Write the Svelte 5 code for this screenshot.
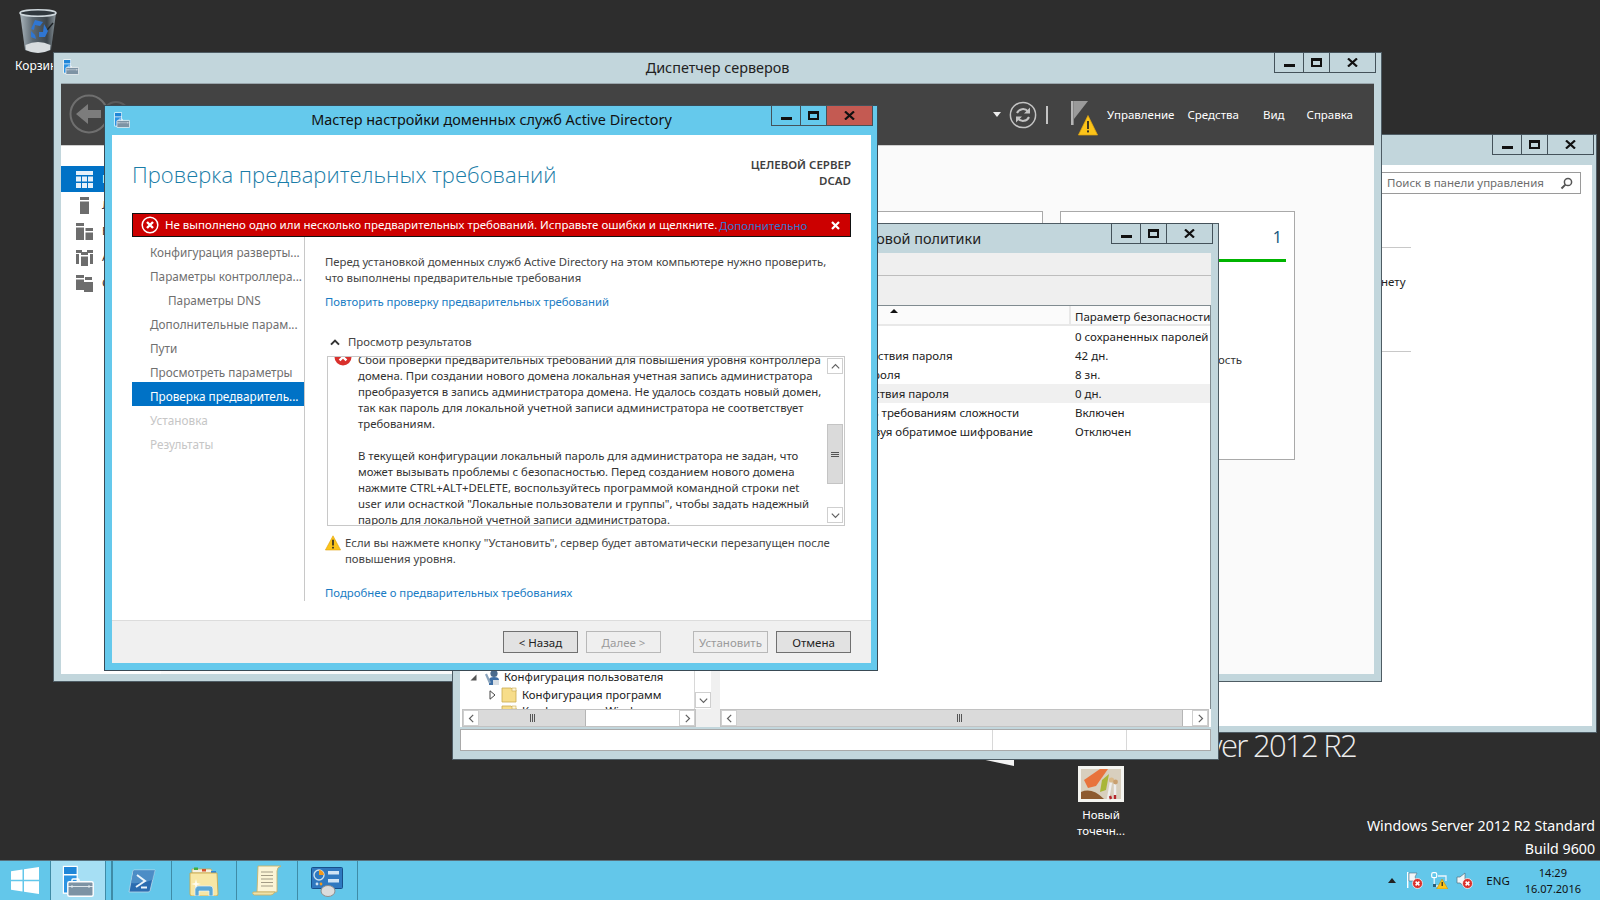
<script lang="ts">
  const wizardSteps = [
    { label: "Конфигурация разверты...", kind: "" },
    { label: "Параметры контроллера...", kind: "" },
    { label: "Параметры DNS", kind: "sub" },
    { label: "Дополнительные парам...", kind: "" },
    { label: "Пути", kind: "" },
    { label: "Просмотреть параметры", kind: "" },
    { label: "Проверка предваритель...", kind: "active" },
    { label: "Установка", kind: "off" },
    { label: "Результаты", kind: "off" }
  ];

  const policyRows = [
    { name: "Вести журнал паролей", value: "0 сохраненных паролей" },
    { name: "Максимальный срок действия пароля", value: "42 дн." },
    { name: "Минимальная длина пароля", value: "8 зн." },
    { name: "Минимальный срок действия пароля", value: "0 дн.", selected: true },
    { name: "Пароль должен отвечать требованиям сложности", value: "Включен" },
    { name: "Хранить пароли, используя обратимое шифрование", value: "Отключен" }
  ];

  const navLetters = ["Панель мониторинга", "Локальный сервер", "Все серверы", "AD DS", "Службы"];
</script>

{#snippet caption(closeRed = false)}
  <div class="caption">
    <span class="cap-btn min"><i></i></span>
    <span class="cap-btn max"><i></i></span>
    <span class="cap-btn close" class:red={closeRed}>
      <svg width="11" height="9" viewBox="0 0 11 9"><path d="M1 0.5 L10 8.5 M10 0.5 L1 8.5" stroke="#111" stroke-width="2.2" /></svg>
    </span>
  </div>
{/snippet}

{#snippet smIcon(size)}
  <svg width={size} height={size} viewBox="0 0 32 32">
    <rect x="0.8" y="0.8" width="15" height="28" fill="#fff" />
    <rect x="2" y="2" width="12.6" height="7" fill="#1f86d8" />
    <rect x="2" y="10.5" width="12.6" height="17" fill="#2b93e2" />
    <rect x="10" y="14" width="7" height="4" rx="1" fill="none" stroke="#fff" stroke-width="1.4" />
    <rect x="5.8" y="16.8" width="25.4" height="14.4" rx="1.5" fill="#7d93a4" stroke="#fff" stroke-width="1.4" />
    <path d="M6 21.5 H31 M10 20 v3 M27 20 v3" stroke="#e8eef2" stroke-width="0.9" />
  </svg>
{/snippet}

{#snippet warnIcon(size)}
  <svg width={size} height={size} viewBox="0 0 16 16">
    <path d="M8 0.8 L15.6 15 H0.4 Z" fill="#fcc419" stroke="#e0a30f" stroke-width="0.6" stroke-linejoin="round" />
    <path d="M8 4.8 V10.6" stroke="#222" stroke-width="1.6" />
    <rect x="7.2" y="11.8" width="1.6" height="1.7" fill="#222" />
  </svg>
{/snippet}

{#snippet chevron(dir)}
  <svg class="chev" width="9" height="9" viewBox="0 0 9 9">
    {#if dir === "up"}
      <path d="M0.8 6.4 L4.5 2.7 L8.2 6.4" />
    {:else if dir === "down"}
      <path d="M0.8 2.6 L4.5 6.3 L8.2 2.6" />
    {:else if dir === "left"}
      <path d="M6.2 0.8 L2.5 4.5 L6.2 8.2" />
    {:else}
      <path d="M2.8 0.8 L6.5 4.5 L2.8 8.2" />
    {/if}
  </svg>
{/snippet}

{#snippet hscrollbar(cls)}
  <div class="hscroll {cls}">
    <span class="sb-btn">{@render chevron("left")}</span>
    <span class="h-thumb"><b></b><b></b><b></b></span>
    <span class="h-rest"></span>
    <span class="sb-btn">{@render chevron("right")}</span>
  </div>
{/snippet}

{#snippet folder()}
  <svg width="16" height="16" viewBox="0 0 16 16">
    <path d="M1 1 H10 L12 3 H15 V15 H1 Z" fill="#f7dd8a" stroke="#c9a94f" stroke-width="0.8" />
    <rect x="11" y="1" width="4" height="3" fill="#fff6d5" stroke="#c9a94f" stroke-width="0.6" />
  </svg>
{/snippet}

<div class="desktop">
  <!-- wallpaper and desktop icons -->
  <svg class="recycle" width="38" height="46" viewBox="0 0 38 46">
    <defs>
      <linearGradient id="binBody" x1="0" x2="1" y1="0" y2="0">
        <stop offset="0" stop-color="#a9b4bb" />
        <stop offset="0.35" stop-color="#5d6972" />
        <stop offset="0.75" stop-color="#3c444a" />
        <stop offset="1" stop-color="#8b969d" />
      </linearGradient>
    </defs>
    <path d="M1 4 L6 41 Q19 47 32 41 L37 4 Z" fill="url(#binBody)" />
    <path d="M24 26 L34 14" stroke="#1f2428" stroke-width="1.4" />
    <ellipse cx="19" cy="4" rx="18" ry="3.2" fill="#30383e" stroke="#cfd8dd" stroke-width="1.5" />
    <path d="M12 20 L16 11 L24 13 L21 17 L16 16 L15 21 Z M25 15 L29 22 L26 28 L20 28 L20 23 L24 23 Z M12 22 L16 26 L17 30 L12 28 Z" fill="#2f76d2" />
    <path d="M6.5 36 Q19 30 31.5 36 L31 41 Q19 47 7 41 Z" fill="#d8dcde" />
  </svg>
  <div class="bin-label">Корзина</div>

  <div class="brand">Windows Server 2012 R2</div>
  <svg class="logo-tip" width="40" height="8" viewBox="0 0 40 8"><path d="M0 0 H38 V8 Z" fill="#f4f4f4" /></svg>

  <div class="paint-file">
    <svg width="46" height="36" viewBox="0 0 46 36">
      <rect width="46" height="36" fill="#f4f4f0" />
      <rect x="3" y="3" width="40" height="30" fill="#d8cfbe" />
      <path d="M6 14 L22 3 H30 L18 20 L10 22 Z" fill="#e8733c" />
      <path d="M24 14 L31 8 L28 24 L22 26 Z" fill="#a9b637" />
      <path d="M3 33 V26 Q14 21 26 33 Z" fill="#8d5a30" />
      <path d="M33 16 L30 33 M37 18 L37 33" stroke="#eee" stroke-width="2.4" />
      <path d="M33 33 L32 30 M37 33 V29" stroke="#b5262a" stroke-width="2.4" />
      <circle cx="33.5" cy="14" r="2.6" fill="#d9b98a" />
      <circle cx="37.5" cy="16" r="2.4" fill="#c9a070" />
    </svg>
    <div>Новый</div>
    <div>точечн...</div>
  </div>

  <div class="edition">
    <div>Windows Server 2012 R2 Standard</div>
    <div>Build 9600</div>
  </div>

  <!-- control panel window -->
  <section class="win panel-win">
    <div class="panel-cap">{@render caption()}</div>
    <div class="panel-body">
      <div class="search">
        <span>Поиск в панели управления</span>
        <svg width="13" height="13" viewBox="0 0 13 13"><circle cx="8" cy="5" r="3.6" fill="none" stroke="#555" stroke-width="1.5" /><path d="M5.4 7.6 L1.5 11.5" stroke="#555" stroke-width="2" /></svg>
      </div>
      <div class="panel-line"></div>
      <div class="panel-net">нету</div>
      <div class="panel-line second"></div>
    </div>
  </section>

  <!-- server manager window -->
  <section class="win sm-win">
    <div class="sm-title">
      {@render smIcon(16)}
      <span>Диспетчер серверов</span>
      {@render caption()}
    </div>
    <div class="sm-inner">
      <header class="sm-head">
        <svg class="back" width="60" height="44" viewBox="0 0 60 44">
          <circle cx="48" cy="22" r="13" fill="none" stroke="#5a5a5a" stroke-width="2" />
          <circle cx="21" cy="21" r="18.5" fill="#434343" stroke="#6f6f6f" stroke-width="2" />
          <path d="M8 21 L20 11 V17 H33 V25 H20 V31 Z" fill="#7c7c7c" />
        </svg>
        <div class="sm-tools">
          <span class="drop"></span>
          <svg width="28" height="28" viewBox="0 0 28 28">
            <circle cx="14" cy="14" r="12.6" fill="none" stroke="#c4c4c4" stroke-width="1.5" />
            <path d="M8 12 A6.5 6.5 0 0 1 19 10.5 M20 16 A6.5 6.5 0 0 1 9 17.5" fill="none" stroke="#c4c4c4" stroke-width="2" />
            <path d="M21 6.5 V12.5 H15 Z M7 21.5 V15.5 H13 Z" fill="#c4c4c4" />
          </svg>
          <span class="tool-sep"></span>
          <svg class="flag" width="34" height="36" viewBox="0 0 34 36">
            <path d="M1 1 H3.6 V25 H1 Z" fill="#b5b5b5" />
            <path d="M4 1 H18 L4 19 Z" fill="#9a9a9a" />
            <g transform="translate(8 15)">
              <path d="M10 0.5 L19.6 20 H0.4 Z" fill="#fcc419" stroke="#e0a30f" stroke-width="0.7" stroke-linejoin="round" />
              <path d="M10 6 V14" stroke="#222" stroke-width="1.7" />
              <rect x="9.1" y="15.4" width="1.8" height="2" fill="#222" />
            </g>
          </svg>
          <nav class="sm-menu">
            <span>Управление</span>
            <span class="m2">Средства</span>
            <span class="m3">Вид</span>
            <span class="m4">Справка</span>
          </nav>
        </div>
      </header>
      <div class="sm-body">
        <aside class="sm-nav">
          {#each navLetters as label, i}
            <div class="nav-item" class:on={i === 0}>
              <svg width="17" height="17" viewBox="0 0 17 17">
                {#if i === 0}
                  <path d="M0 0 H17 V4 H0 Z M0 5.5 H5 V10.5 H0 Z M6 5.5 H11 V10.5 H6 Z M12 5.5 H17 V10.5 H12 Z M0 12 H5 V17 H0 Z M6 12 H11 V17 H6 Z M12 12 H17 V17 H12 Z" fill="#fff" opacity="0.9" />
                {:else if i === 1}
                  <path d="M4 0 H13 V3 H4 Z M4 4.5 H13 V17 H4 Z" fill="#6d6d6d" />
                {:else if i === 2}
                  <path d="M0 0 H8 V3 H0 Z M0 4.5 H8 V17 H0 Z M9.5 5 H17 V8 H9.5 Z M9.5 9.5 H17 V17 H9.5 Z" fill="#6d6d6d" />
                {:else if i === 3}
                  <path d="M0 1 H6 V4 H0 Z M0 5 H3 V15 H0 Z M11 1 H17 V4 H11 Z M14 5 H17 V15 H14 Z M5 3 H12 V6 H5 Z M5 7.5 H12 V17 H5 Z" fill="#6d6d6d" />
                {:else}
                  <path d="M0 0 H8 V3 H0 Z M0 4.5 H8 V15 H0 Z M9 2 H16 V5 H9 Z M8 7 H17 V17 H8 Z" fill="#6d6d6d" />
                {/if}
              </svg>
              <span>{label}</span>
            </div>
          {/each}
        </aside>
        <div class="sm-cards">
          <div class="card first"></div>
          <div class="card second">
            <div class="card-count">1</div>
            <div class="card-bar"></div>
            <div class="card-text">Производительность</div>
          </div>
        </div>
      </div>
    </div>
  </section>

  <!-- group policy editor window -->
  <section class="win gp-win">
    <div class="gp-title">
      <div class="gp-name">Редактор локальной групповой политики</div>
      {@render caption()}
    </div>
    <div class="gp-bar"></div>
    <div class="gp-bar tall"></div>
    <div class="gp-panes">
      <div class="gp-left">
        <div class="tree-area">
          <div class="tree">
            <div class="tree-row user">
              <svg class="twist" width="7" height="7" viewBox="0 0 7 7"><path d="M0.5 6.5 H6.5 V0.5 Z" fill="#555" /></svg>
              <svg width="17" height="17" viewBox="0 0 17 17">
                <circle cx="10" cy="4.5" r="3.6" fill="#4a6a8c" />
                <path d="M5 16 V11 Q5 8 10 8 Q15 8 15 11 V16 Z" fill="#3d6ea5" />
                <path d="M2 5 L6 14" stroke="#8aa4bd" stroke-width="2.2" />
                <rect x="9" y="11" width="6" height="5" fill="#d8dee4" />
              </svg>
              <span>Конфигурация пользователя</span>
            </div>
            <div class="tree-row folder">
              <svg class="twist" width="7" height="10" viewBox="0 0 7 10"><path d="M1 0.8 L6 5 L1 9.2 Z" fill="#fff" stroke="#444" /></svg>
              {@render folder()}
              <span>Конфигурация программ</span>
            </div>
            <div class="tree-row folder cut">
              <span class="twist-gap"></span>
              {@render folder()}
              <span class="cut-name">Конфигурация Windows</span>
            </div>
          </div>
          <div class="tree-vbar">
            <span class="sb-btn">{@render chevron("down")}</span>
          </div>
        </div>
        <div class="tree-foot">
          {@render hscrollbar("short")}
          <span class="corner"></span>
        </div>
      </div>
      <div class="gp-right">
        <div class="gp-table">
          <div class="gp-row head">
            <div class="cell-name"><span class="sort"></span></div>
            <div class="cell-val">Параметр безопасности</div>
          </div>
          {#each policyRows as row}
            <div class="gp-row" class:sel={row.selected}>
              <div class="cell-name">{row.name}</div>
              <div class="cell-val">{row.value}</div>
            </div>
          {/each}
        </div>
        {@render hscrollbar("long")}
      </div>
    </div>
    <div class="gp-status">
      <span></span><span></span><span></span>
    </div>
  </section>

  <!-- domain services wizard -->
  <section class="win wizard">
    <div class="wiz-title">
      <span class="wiz-icon">{@render smIcon(16)}</span>
      <span class="wiz-name">Мастер настройки доменных служб Active Directory</span>
      {@render caption(true)}
    </div>
    <div class="wiz-page">
      <div class="wiz-main">
        <div class="wiz-head">
          <h1>Проверка предварительных требований</h1>
          <div class="target">ЦЕЛЕВОЙ СЕРВЕР<br />DCAD</div>
        </div>
        <div class="alert">
          <svg width="18" height="18" viewBox="0 0 18 18">
            <circle cx="9" cy="9" r="7.8" fill="none" stroke="#fff" stroke-width="1.5" />
            <path d="M6 6 L12 12 M12 6 L6 12" stroke="#fff" stroke-width="2.4" />
          </svg>
          <span class="alert-text">Не выполнено одно или несколько предварительных требований. Исправьте ошибки и щелкните...</span>
          <span class="alert-link">Дополнительно</span>
          <svg class="alert-x" width="9" height="9" viewBox="0 0 9 9"><path d="M1 1 L8 8 M8 1 L1 8" stroke="#fff" stroke-width="2.2" /></svg>
        </div>
        <div class="wiz-cols">
          <aside class="steps">
            {#each wizardSteps as step}
              <div class="step {step.kind}">{step.label}</div>
            {/each}
          </aside>
          <div class="wiz-content">
            <p class="intro">Перед установкой доменных служб Active Directory на этом компьютере нужно проверить,<br />что выполнены предварительные требования</p>
            <div class="link retry">Повторить проверку предварительных требований</div>
            <div class="results-head">
              <svg width="10" height="7" viewBox="0 0 10 7"><path d="M1 5.6 L5 1.6 L9 5.6" fill="none" stroke="#333" stroke-width="2" /></svg>
              <span>Просмотр результатов</span>
            </div>
            <div class="results">
              <div class="results-scroll">
                <svg class="err" width="18" height="18" viewBox="0 0 18 18">
                  <circle cx="9" cy="9" r="8.5" fill="#d9302c" />
                  <path d="M5.6 5.6 L12.4 12.4 M12.4 5.6 L5.6 12.4" stroke="#fff" stroke-width="2.4" />
                </svg>
                <div class="results-text">
                  <p>Сбои проверки предварительных требований для повышения уровня контроллера<br />домена. При создании нового домена локальная учетная запись администратора<br />преобразуется в запись администратора домена. Не удалось создать новый домен,<br />так как пароль для локальной учетной записи администратора не соответствует<br />требованиям.</p>
                  <p>В текущей конфигурации локальный пароль для администратора не задан, что<br />может вызывать проблемы с безопасностью. Перед созданием нового домена<br />нажмите CTRL+ALT+DELETE, воспользуйтесь программой командной строки net<br />user или оснасткой "Локальные пользователи и группы", чтобы задать надежный<br />пароль для локальной учетной записи администратора.</p>
                </div>
              </div>
              <div class="vscroll">
                <span class="sb-btn">{@render chevron("up")}</span>
                <span class="v-gap a"></span>
                <span class="v-thumb"><b></b><b></b><b></b></span>
                <span class="v-gap"></span>
                <span class="sb-btn">{@render chevron("down")}</span>
              </div>
            </div>
            <div class="notice">
              {@render warnIcon(16)}
              <p>Если вы нажмете кнопку "Установить", сервер будет автоматически перезапущен после<br />повышения уровня.</p>
            </div>
            <div class="link more">Подробнее о предварительных требованиях</div>
          </div>
        </div>
      </div>
      <footer class="wiz-foot">
        <span class="btn">&lt; Назад</span>
        <span class="btn dis">Далее &gt;</span>
        <span class="btn dis far">Установить</span>
        <span class="btn">Отмена</span>
      </footer>
    </div>
  </section>

  <!-- taskbar -->
  <div class="taskbar">
    <div class="tb-tile start">
      <svg width="28" height="27" viewBox="0 0 28 27">
        <path d="M0 4.2 L11.5 2.5 V12.7 H0 Z M13 2.2 L28 0 V12.7 H13 Z M0 14.2 H11.5 V24.4 L0 22.7 Z M13 14.2 H28 V27 L13 24.7 Z" fill="#fff" />
      </svg>
    </div>
    <div class="tb-tile sm">{@render smIcon(32)}</div>
    <div class="tb-tile gap"></div>
    <div class="tb-tile ps">
      <svg width="28" height="24" viewBox="0 0 28 24">
        <path d="M6 1 H27 L22 22 Q21.6 23 20 23 H1 L5 2 Q5.3 1 6 1 Z" fill="#2b6cb0" stroke="#bcd8ea" stroke-width="0.8" />
        <path d="M6 1 H27 L24.6 11 Q14 15 3 14 Z" fill="#5b9bd0" opacity="0.7" />
        <path d="M9 6 L17 12 L8 18 M13 18.5 H19" fill="none" stroke="#eaf4fb" stroke-width="2" />
      </svg>
    </div>
    <div class="tb-tile ex">
      <svg width="30" height="30" viewBox="0 0 30 30">
        <path d="M3 3 H22 L24 7 H3 Z" fill="#f4f0e0" stroke="#c9a94f" stroke-width="0.8" />
        <rect x="5" y="1.5" width="4" height="2.5" fill="#3fae3f" />
        <rect x="13" y="3" width="4" height="2.5" fill="#d9532c" />
        <rect x="22" y="5" width="5" height="2.5" fill="#3486d6" />
        <path d="M1 7 H28 L29 28 Q29 30 27 30 H3 Q1 30 1 28 Z" fill="#f7e7a6" stroke="#c9a94f" stroke-width="0.9" />
        <path d="M6 30 V23 Q6 20 9 20 H21 Q24 20 24 23 V30 H20 V25 H10 V30 Z" fill="#5aa7d6" stroke="#eaf4fb" stroke-width="0.7" />
        <path d="M7 13 L8 17 L12 18 L8 19 L7 23 L6 19 L2 18 L6 17 Z" fill="#fff" opacity="0.85" />
      </svg>
    </div>
    <div class="tb-tile np">
      <svg width="30" height="31" viewBox="0 0 30 31">
        <path d="M6 1 H29 Q25 2 25 6 V27 H5 Z" fill="#fbf4d6" stroke="#c9b26a" stroke-width="0.9" />
        <path d="M1 27 H23 Q21 30 19 30 H2 Q0 29 1 27 Z" fill="#efe2a8" stroke="#c9b26a" stroke-width="0.9" />
        <path d="M9 7 H21 M9 10.5 H21 M9 14 H21 M9 17.5 H21 M9 21 H21" stroke="#a39b85" stroke-width="1.1" />
      </svg>
    </div>
    <div class="tb-tile cp">
      <svg class="cp-ico" width="33" height="30" viewBox="0 0 33 30">
        <rect x="0.5" y="0.5" width="31" height="21" rx="1" fill="#2f79c0" stroke="#17508a" />
        <circle cx="8" cy="8" r="5" fill="none" stroke="#c8e0f2" stroke-width="1.4" />
        <path d="M8 3 A5 5 0 0 1 13 8 H8 Z" fill="#f39a1d" />
        <rect x="17" y="4" width="11" height="3.5" fill="#cfe4f4" />
        <rect x="17" y="12" width="11" height="3.5" fill="#cfe4f4" />
        <circle cx="6" cy="17" r="1.4" fill="#cfe4f4" />
        <circle cx="10" cy="17" r="1.4" fill="#f39a1d" />
        <ellipse cx="17" cy="24" rx="7" ry="5.5" fill="#dcdcdc" stroke="#8d8d8d" />
      </svg>
    </div>
    <div class="tray">
      <span class="tray-up"></span>
      <svg class="tray-ico" width="17" height="17" viewBox="0 0 17 17">
        <path d="M1 0 H2.4 V16 H1 Z" fill="#fff" />
        <path d="M3 1 H11 L9 5 L11 9 H3 Z" fill="#f2f6f8" stroke="#51707f" stroke-width="0.6" />
        <circle cx="11.5" cy="11.5" r="5" fill="#d9302c" stroke="#fff" stroke-width="0.7" />
        <path d="M9.6 9.6 L13.4 13.4 M13.4 9.6 L9.6 13.4" stroke="#fff" stroke-width="1.5" />
      </svg>
      <svg class="tray-ico" width="17" height="17" viewBox="0 0 17 17">
        <rect x="0.7" y="0.7" width="5" height="5" rx="1.5" fill="none" stroke="#fff" stroke-width="1.2" />
        <path d="M3.2 6 V14 H8 M7 4 H15 V9" fill="none" stroke="#eaf4fb" stroke-width="1.3" />
        <rect x="2" y="12" width="3" height="3" fill="#2d5d75" />
        <path d="M11 7 L17 17 H5.5 Z" fill="#fcc419" stroke="#b98a10" stroke-width="0.5" />
        <path d="M11.2 10 V14" stroke="#222" stroke-width="1.2" />
      </svg>
      <svg class="tray-ico" width="17" height="17" viewBox="0 0 17 17">
        <path d="M1 5 H4 L9 1 V15 L4 11 H1 Z" fill="#f2f6f8" stroke="#51707f" stroke-width="0.7" />
        <circle cx="11.5" cy="11.5" r="5" fill="#d9302c" stroke="#fff" stroke-width="0.7" />
        <path d="M9.6 9.6 L13.4 13.4 M13.4 9.6 L9.6 13.4" stroke="#fff" stroke-width="1.5" />
      </svg>
      <span class="lang">ENG</span>
      <div class="clock">14:29<br />16.07.2016</div>
    </div>
  </div>
</div>

<style>
  :global(body) {
    margin: 0;
    background: #2d2d2d;
    overflow: hidden;
  }
  * {
    box-sizing: border-box;
  }
  p,
  h1 {
    margin: 0;
  }

  .desktop {
    position: relative;
    width: 1600px;
    height: 900px;
    background: #2d2d2d;
    overflow: hidden;
    font: 11.5px/16px "Noto Sans", "Open Sans", sans-serif;
    color: #333;
  }

  /* desktop items sit freely on the wallpaper */
  .recycle {
    position: absolute;
    left: 19px;
    top: 9px;
  }
  .bin-label {
    position: absolute;
    left: 15px;
    top: 58px;
    color: #fff;
    font-size: 12px;
  }
  .brand {
    position: absolute;
    right: 244px;
    top: 724px;
    font: 300 31px/42px "Open Sans", sans-serif;
    letter-spacing: -1.7px;
    color: #ececec;
    white-space: nowrap;
  }
  .logo-tip {
    position: absolute;
    left: 976px;
    top: 758px;
  }
  .paint-file {
    position: absolute;
    left: 1061px;
    top: 766px;
    width: 80px;
    display: flex;
    flex-direction: column;
    align-items: center;
    color: #fff;
  }
  .paint-file svg {
    margin-bottom: 5px;
  }
  .edition {
    position: absolute;
    right: 5px;
    top: 814px;
    text-align: right;
    color: #fff;
    font-size: 14.2px;
    line-height: 23px;
  }

  /* windows */
  .win {
    position: absolute;
    border: 1px solid #4e5c64;
    background: #c2d6dc;
  }
  .caption {
    display: flex;
    align-items: stretch;
    height: 21px;
    border: 1px solid #44525a;
    margin: -1px -2px 0 0;
  }
  .cap-btn {
    display: flex;
    align-items: center;
    justify-content: center;
    border-left: 1px solid #44525a;
  }
  .cap-btn:first-child {
    border-left: 0;
  }
  .min {
    width: 28px;
    padding-top: 5px;
  }
  .min i {
    width: 11px;
    height: 3px;
    background: #111;
  }
  .max {
    width: 26px;
  }
  .max i {
    width: 11px;
    height: 9px;
    border: 2px solid #111;
    border-top-width: 3px;
  }
  .close {
    width: 46px;
  }
  .close.red {
    background: #c45a52;
  }

  /* control panel */
  .panel-win {
    left: 1000px;
    top: 134px;
    width: 597px;
    height: 599px;
    padding: 0 4px 6px 7px;
    display: flex;
    flex-direction: column;
  }
  .panel-cap {
    height: 30px;
    display: flex;
    justify-content: flex-end;
  }
  .panel-body {
    flex: 1;
    background: #fff;
    padding: 7px 11px 0 373px;
  }
  .search {
    height: 22px;
    border: 1px solid #9a9a9a;
    display: flex;
    align-items: center;
    justify-content: space-between;
    padding: 0 7px 0 11px;
    color: #6d6d6d;
    margin-left: -6px;
    overflow: hidden;
  }
  .panel-line {
    height: 1px;
    width: 30px;
    background: #c8c8c8;
    margin-top: 53px;
  }
  .panel-net {
    margin-top: 26px;
    color: #222;
  }
  .panel-line.second {
    margin-top: 61px;
  }

  /* server manager */
  .sm-win {
    left: 53px;
    top: 52px;
    width: 1329px;
    height: 630px;
    padding: 0 7px 7px 7px;
    display: flex;
    flex-direction: column;
  }
  .sm-title {
    height: 30px;
    display: grid;
    grid-template-columns: 1fr auto 1fr;
    align-items: start;
    flex: none;
    font-size: 14.4px;
  }
  .sm-title > :global(svg) {
    margin: 6px 0 0 2px;
  }
  .sm-title > span {
    padding-top: 5px;
    color: #222;
    line-height: 20px;
  }
  .sm-title :global(.caption) {
    justify-self: end;
  }
  .sm-inner {
    flex: 1;
    background: #fafafa;
    display: flex;
    flex-direction: column;
    border-top: 1px solid #9aa7ad;
  }
  .sm-head {
    height: 62px;
    background: #434343;
    display: flex;
    align-items: center;
    justify-content: space-between;
    border-bottom: 1px solid #cfcfcf;
    padding: 0 0 0 7px;
  }
  .sm-tools {
    display: flex;
    align-items: center;
    padding-right: 21px;
    color: #fff;
  }
  .drop {
    border: 4px solid transparent;
    border-top: 5px solid #eee;
    border-bottom: 0;
    margin-right: 8px;
  }
  .tool-sep {
    width: 2px;
    height: 18px;
    background: #c4c4c4;
    margin: 0 22px 0 9px;
  }
  .flag {
    margin: 6px 0 0 0;
  }
  .sm-menu {
    display: flex;
    margin-left: 3px;
  }
  .m2 {
    margin-left: 13px;
  }
  .m3 {
    margin-left: 24px;
  }
  .m4 {
    margin-left: 22px;
  }
  .sm-body {
    flex: 1;
    display: flex;
  }
  .sm-nav {
    width: 100px;
    padding-top: 20px;
    background: #fff;
  }
  .nav-item {
    height: 26px;
    padding-left: 15px;
    display: flex;
    align-items: center;
    gap: 9px;
    white-space: nowrap;
    color: #333;
    overflow: hidden;
  }
  .nav-item svg {
    flex: none;
  }
  .nav-item.on {
    background: #0072c6;
    color: #fff;
  }
  .sm-cards {
    flex: 1;
    display: flex;
    justify-content: flex-end;
    gap: 17px;
    padding: 65px 79px 0 0;
  }
  .card {
    background: #fff;
    border: 1px solid #a9a9a9;
    height: 249px;
  }
  .card.first {
    width: 500px;
  }
  .card.second {
    width: 235px;
    padding: 15px 8px 0 6px;
    text-align: right;
  }
  .card-count {
    font-size: 16px;
    line-height: 20px;
    color: #1c5a80;
    padding-right: 4px;
  }
  .card-bar {
    height: 3px;
    background: #00b400;
    margin-top: 12px;
  }
  .card-text {
    margin-top: 90px;
    padding-right: 44px;
    white-space: nowrap;
  }

  /* group policy */
  .gp-win {
    left: 452px;
    top: 223px;
    width: 767px;
    height: 537px;
    padding: 0 7px 8px 7px;
    display: flex;
    flex-direction: column;
  }
  .gp-title {
    height: 29px;
    position: relative;
    text-align: center;
    font-size: 14.4px;
    line-height: 20px;
    flex: none;
  }
  .gp-name {
    padding-top: 5px;
    color: #222;
  }
  .gp-title :global(.caption) {
    position: absolute;
    right: 0;
    top: 0;
  }
  .gp-bar {
    height: 23px;
    background: #efefef;
    flex: none;
    border-bottom: 1px solid #bdbdbd;
  }
  .gp-bar.tall {
    height: 30px;
    border-bottom: 1px solid #808b90;
  }
  .gp-panes {
    flex: 1;
    display: flex;
    gap: 9px;
    background: #f0f0f0;
    min-height: 0;
  }
  .gp-left {
    width: 251px;
    display: flex;
    flex-direction: column;
    background: #fff;
  }
  .tree-area {
    flex: 1;
    display: flex;
    min-height: 0;
    overflow: hidden;
  }
  .tree {
    flex: 1;
    display: flex;
    flex-direction: column;
    justify-content: flex-end;
    overflow: hidden;
    color: #222;
    font-size: 11.35px;
  }
  .tree-row {
    height: 18px;
    display: flex;
    align-items: center;
    gap: 4px;
    white-space: nowrap;
    flex: none;
  }
  .tree-row.user {
    padding-left: 10px;
    gap: 7px;
  }
  .tree-row.user svg:nth-child(2) {
    margin-right: -4px;
  }
  .tree-row.folder {
    padding-left: 29px;
    gap: 5px;
  }
  .twist-gap {
    width: 7px;
  }
  .tree-row.cut {
    height: 17px;
    margin-bottom: -12px;
  }
  .cut-name {
    margin-top: -4px;
  }
  .tree-vbar {
    width: 17px;
    display: flex;
    flex-direction: column;
    justify-content: flex-end;
    background: #fff;
    border-left: 1px solid #d8d8d8;
    padding-bottom: 1px;
  }
  .tree-foot {
    display: flex;
    height: 18px;
    flex: none;
  }
  .corner {
    width: 17px;
    background: #f0f0f0;
  }
  .hscroll {
    height: 18px;
    display: flex;
    flex: none;
    border: 1px solid #c2c2c2;
    background: #fff;
  }
  .hscroll.short {
    width: 234px;
    margin-left: 2px;
  }
  .hscroll.long {
    width: 489px;
  }
  .sb-btn {
    width: 16px;
    height: 16px;
    flex: none;
    display: flex;
    align-items: center;
    justify-content: center;
    background: #fff;
    border: 1px solid #cfcfcf;
  }
  .chev path {
    fill: none;
    stroke: #606060;
    stroke-width: 1.2;
  }
  .h-thumb {
    background: #dadada;
    display: flex;
    align-items: center;
    justify-content: center;
    gap: 1px;
    border-right: 1px solid #b5b5b5;
  }
  .h-thumb b {
    width: 1px;
    height: 8px;
    background: #555;
  }
  .short .h-thumb {
    width: 107px;
  }
  .long .h-thumb {
    width: 446px;
  }
  .h-rest {
    flex: 1;
  }
  .gp-right {
    width: 491px;
    display: flex;
    flex-direction: column;
    background: #fff;
  }
  .gp-table {
    flex: 1;
    border-right: 1px solid #808b90;
    color: #222;
    white-space: nowrap;
  }
  .gp-row {
    display: grid;
    grid-template-columns: 349px 1fr;
    height: 19px;
    line-height: 19px;
  }
  .gp-row.sel {
    background: #f0f0f0;
  }
  .gp-row.head {
    height: 20px;
    line-height: 22px;
    margin-bottom: 1px;
    background: #fbfbfb;
    border-bottom: 2px solid #e8e8e8;
  }
  .gp-row.head .cell-val {
    border-left: 2px solid #e8e8e8;
    padding-left: 4px;
    overflow: hidden;
  }
  .gp-row.head .cell-name {
    position: relative;
  }
  .sort {
    position: absolute;
    left: 170px;
    top: 3px;
    border: 4px solid transparent;
    border-bottom: 4px solid #111;
    border-top: 0;
  }
  .cell-name {
    padding-left: 19px;
  }
  .cell-val {
    padding-left: 6px;
  }
  .gp-status {
    height: 22px;
    margin-top: 2px;
    display: grid;
    grid-template-columns: 531px 134px 1fr;
    background: #fff;
    border: 1px solid #a9a9a9;
    flex: none;
  }
  .gp-status span + span {
    border-left: 1px solid #d8d8d8;
  }

  /* wizard */
  .wizard {
    left: 104px;
    top: 105px;
    width: 774px;
    height: 566px;
    background: #65c9ec;
    padding: 0 6px 7px 7px;
    display: flex;
    flex-direction: column;
    border-color: #394a55;
  }
  .wiz-title {
    height: 29px;
    display: grid;
    grid-template-columns: 1fr auto 1fr;
    align-items: start;
    flex: none;
    font-size: 14.4px;
  }
  .wiz-icon {
    padding: 6px 0 0 2px;
    display: block;
    line-height: 0;
  }
  .wiz-name {
    padding-top: 4px;
    line-height: 20px;
    color: #111;
  }
  .wiz-title :global(.caption) {
    justify-self: end;
  }
  .wiz-page {
    flex: 1;
    background: #fff;
    display: flex;
    flex-direction: column;
    min-height: 0;
  }
  .wiz-main {
    flex: 1;
    padding: 0 20px;
    min-height: 0;
  }
  .wiz-head {
    height: 78px;
    display: flex;
    justify-content: space-between;
    padding-top: 23px;
  }
  h1 {
    font: 300 22px/32px "Open Sans", sans-serif;
    color: #1a7da8;
  }
  .target {
    text-align: right;
    font-weight: 600;
    color: #3f3f3f;
    margin-top: -1px;
  }
  .alert {
    height: 24px;
    background: #cc0000;
    border: 1px solid #111;
    display: flex;
    align-items: center;
    padding-left: 8px;
    color: #fff;
    white-space: nowrap;
  }
  .alert-text {
    margin-left: 6px;
    width: 552px;
    overflow: hidden;
  }
  .alert-link {
    color: #3374cc;
    margin-left: 2px;
    padding-top: 2px;
  }
  .alert-x {
    margin-left: 24px;
  }
  .wiz-cols {
    display: grid;
    grid-template-columns: 173px 1fr;
    height: 363px;
  }
  .steps {
    border-right: 1px solid #c8c8c8;
    padding-top: 1px;
  }
  .step {
    height: 24px;
    line-height: 28px;
    padding-left: 18px;
    color: #6f6f6f;
    font-size: 11.75px;
    white-space: nowrap;
    overflow: hidden;
  }
  .step.sub {
    padding-left: 36px;
  }
  .step.active {
    background: #0072c6;
    color: #fff;
  }
  .step.off {
    color: #c6c6c6;
  }
  .wiz-content {
    padding-left: 20px;
    color: #444;
    font-size: 11.35px;
  }
  .intro {
    margin-top: 17px;
  }
  .link {
    color: #1a7cc4;
  }
  .retry {
    margin-top: 8px;
  }
  .results-head {
    display: flex;
    align-items: center;
    gap: 8px;
    margin: 24px 0 6px 5px;
    height: 16px;
  }
  .results {
    height: 170px;
    width: 518px;
    margin-left: 2px;
    border: 1px solid #c8c8c8;
    display: flex;
    overflow: hidden;
  }
  .results-scroll {
    flex: 1;
    overflow: hidden;
    display: flex;
    padding-left: 6px;
  }
  .err {
    flex: none;
    margin-top: -9px;
  }
  .results-text {
    margin: -5px 0 0 6px;
    color: #333;
    white-space: nowrap;
  }
  .results-text p + p {
    margin-top: 16px;
  }
  .vscroll {
    width: 17px;
    padding: 1px 1px 2px 0;
    display: flex;
    flex-direction: column;
    flex: none;
  }
  .v-gap {
    flex: 1;
  }
  .v-gap.a {
    flex: none;
    height: 50px;
  }
  .v-thumb {
    height: 60px;
    flex: none;
    background: #dadada;
    display: flex;
    flex-direction: column;
    align-items: center;
    justify-content: center;
    gap: 1px;
    border: 1px solid #c4c4c4;
  }
  .v-thumb b {
    width: 8px;
    height: 1px;
    background: #555;
  }
  .notice {
    display: flex;
    gap: 4px;
    margin-top: 9px;
  }
  .notice :global(svg) {
    flex: none;
  }
  .more {
    margin-top: 18px;
  }
  .wiz-foot {
    height: 43px;
    background: #f0f0f0;
    border-top: 1px solid #dcdcdc;
    display: flex;
    justify-content: flex-end;
    align-items: center;
    gap: 8px;
    padding-right: 20px;
    flex: none;
  }
  .btn {
    width: 75px;
    height: 22px;
    line-height: 21px;
    text-align: center;
    background: #e2e2e2;
    border: 1px solid #707070;
    color: #222;
  }
  .btn.dis {
    background: #efefef;
    border-color: #b8b8b8;
    color: #9a9a9a;
  }
  .btn.far {
    margin-left: 24px;
  }

  /* taskbar */
  .taskbar {
    position: absolute;
    left: 0;
    right: 0;
    bottom: 0;
    height: 40px;
    background: #63c7ea;
    border-top: 1px solid #59707c;
    display: flex;
    align-items: stretch;
  }
  .tb-tile {
    display: flex;
    align-items: center;
    justify-content: center;
    border-right: 1px solid #3f8ba6;
    flex: none;
  }
  .start {
    width: 51px;
  }
  .tb-tile.sm {
    width: 55px;
    background: #a6dff4;
  }
  .tb-tile.gap {
    width: 7px;
    border-right-width: 2px;
  }
  .ps {
    width: 59px;
  }
  .ex {
    width: 65px;
  }
  .np {
    width: 61px;
  }
  .cp {
    width: 60px;
  }
  .cp-ico {
    margin-top: 2px;
  }
  .tray {
    margin-left: auto;
    display: flex;
    align-items: center;
    color: #111;
    padding-right: 19px;
  }
  .tray-up {
    border: 4px solid transparent;
    border-bottom: 5px solid #222;
    border-top: 0;
    margin-right: 10px;
  }
  .tray-ico {
    margin-right: 8px;
  }
  .lang {
    margin: 0 15px 0 5px;
  }
  .clock {
    text-align: center;
    font-size: 11px;
    line-height: 16px;
  }
</style>
